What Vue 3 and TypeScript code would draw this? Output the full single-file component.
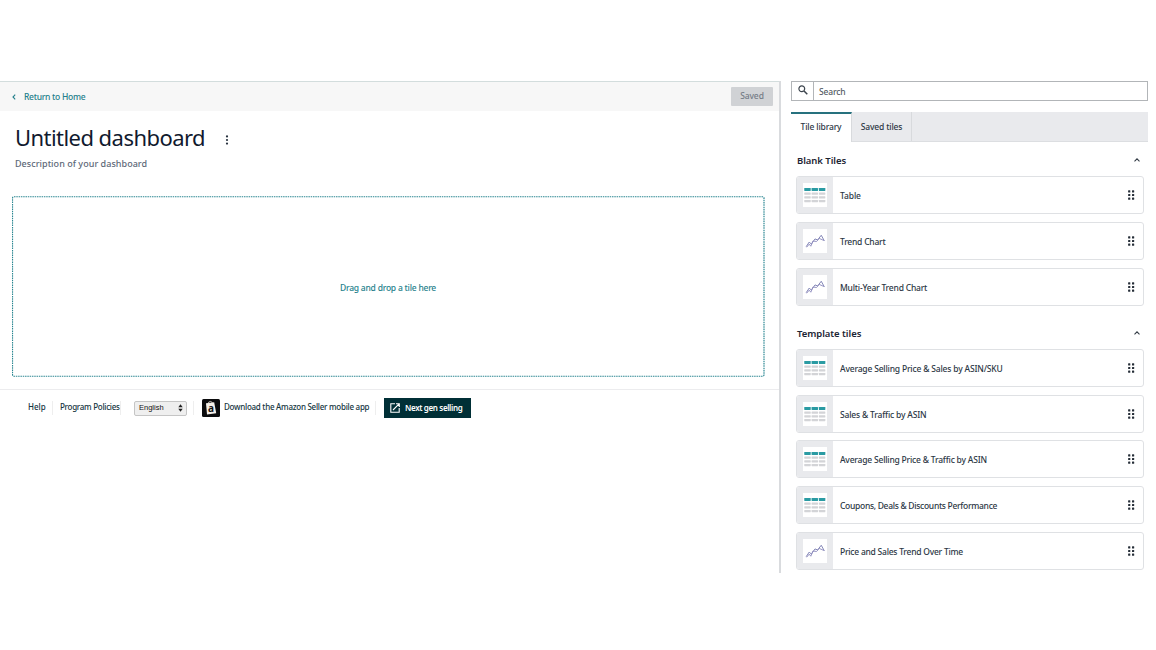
<script setup lang="ts">
interface Tile {
  label: string
  kind: 'table' | 'trend'
  spacing: number
}
interface Section {
  title: string
  tiles: Tile[]
}

const sections: Section[] = [
  {
    title: 'Blank Tiles',
    tiles: [
      { label: 'Table', kind: 'table', spacing: -0.1 },
      { label: 'Trend Chart', kind: 'trend', spacing: -0.22 },
      { label: 'Multi-Year Trend Chart', kind: 'trend', spacing: -0.21 },
    ],
  },
  {
    title: 'Template tiles',
    tiles: [
      { label: 'Average Selling Price & Sales by ASIN/SKU', kind: 'table', spacing: -0.18 },
      { label: 'Sales & Traffic by ASIN', kind: 'table', spacing: -0.18 },
      { label: 'Average Selling Price & Traffic by ASIN', kind: 'table', spacing: -0.2 },
      { label: 'Coupons, Deals & Discounts Performance', kind: 'table', spacing: -0.3 },
      { label: 'Price and Sales Trend Over Time', kind: 'trend', spacing: -0.24 },
    ],
  },
]
</script>

<template>
  <div class="page">
    <main class="main">
      <header class="topbar">
        <a class="back">
          <svg width="4" height="6" viewBox="0 0 4 6"><path d="M3.2 .7 1 3l2.200 2.300" fill="none" stroke="#247f8b" stroke-width="1.100" /></svg>
          <span>Return to Home</span>
        </a>
        <button class="saved">Saved</button>
      </header>
      <div class="title-row">
        <h1>Untitled dashboard</h1>
        <svg class="kebab" width="4" height="10" viewBox="0 0 4 10" fill="#28323f">
          <circle cx="2" cy="1.400" r="1.100" /><circle cx="2" cy="5" r="1.100" /><circle cx="2" cy="8.600" r="1.100" />
        </svg>
      </div>
      <p class="desc">Description of your dashboard</p>
      <div class="drop">
        <svg class="outline" width="753" height="181">
          <rect x=".5" y=".75" width="751.5" height="179.500" rx="1.500" fill="none" stroke="#2c8792" stroke-width="1.200" stroke-dasharray="1.500 .8" />
        </svg>
        <span>Drag and drop a tile here</span>
      </div>
      <footer class="footer">
        <a class="help">Help</a>
        <i class="sep" />
        <a class="policies">Program Policies</a>
        <i class="sep s2" />
        <div class="select">
          <span>English</span>
          <svg width="5" height="8" viewBox="0 0 5 8"><path d="M.3 3.300 2.500.3l2.200 3zM.3 4.700l2.200 3 2.200-3z" fill="#222" /></svg>
        </div>
        <i class="sep s3" />
        <div class="app-icon">
          <svg width="18" height="18" viewBox="0 0 18 18">
            <rect width="18" height="18" rx="1.500" fill="#0b0b0d" />
            <path d="M4 4.200 12.200 3.200 14.200 14.300 5 15.500z" fill="#f4efe9" />
            <path d="M6.500 4.500V3.300Q8.300 1.500 10.200 3.300V4" fill="none" stroke="#e5ddd5" stroke-width=".8" />
          </svg>
          <b>a</b>
        </div>
        <span class="download">Download the Amazon Seller mobile app</span>
        <i class="sep s4" />
        <button class="nextgen">
          <svg width="10" height="10" viewBox="0 0 10 10" fill="none" stroke="#fff" stroke-width="1.100">
            <path d="M5 .8H.8V9.200H9.200V5M6 .7H9.300V4M9.100 .9 3 7" />
          </svg>
          <span>Next gen selling</span>
        </button>
      </footer>
    </main>

    <aside class="side">
      <div class="search">
        <div class="glass">
          <svg width="10" height="10" viewBox="0 0 10 10" fill="none" stroke="#3c444d"><circle cx="3.800" cy="3.800" r="2.900" stroke-width="1.200" /><path d="M6 6 9.300 9.300" stroke-width="1.500" /></svg>
        </div>
        <span>Search</span>
      </div>
      <nav class="tabs">
        <div class="tab active"><span>Tile library</span></div>
        <div class="tab"><span>Saved tiles</span></div>
      </nav>
      <section v-for="section in sections" :key="section.title" class="section">
        <h2>
          <span>{{ section.title }}</span>
          <svg width="6" height="4" viewBox="0 0 6 4"><path d="M.5 3.400 3 .9l2.500 2.500" fill="none" stroke="#333c46" stroke-width="1.100" /></svg>
        </h2>
        <div class="tiles">
          <article v-for="tile in section.tiles" :key="tile.label" class="tile">
            <div class="thumb">
              <svg v-if="tile.kind === 'table'" width="24" height="24" viewBox="0 0 23 23">
                <rect width="23" height="23" fill="#fff" />
                <g v-for="col in 3" :key="col" :transform="`translate(${(col - 1) * 7 + 1.2} 0)`">
                  <rect y="4.800" width="6.200" height="2.900" rx=".4" fill="#2a9ba3" />
                  <rect v-for="row in 3" :key="row" :y="5.6 + row * 3.6" width="6.200" height="2" rx=".4" fill="#d3d4d7" />
                </g>
              </svg>
              <svg v-else width="24" height="24" viewBox="0 0 23 23" fill="none" stroke-linejoin="round">
                <rect width="23" height="23" fill="#fff" />
                <path d="M3 17 6 12.500 8 14.500 11.500 9.500 14 10.500 17.500 6 20.500 11.500" stroke="#7c7fb2" stroke-width=".9" />
                <path d="M3.500 17.500 6 14.500 7.500 16.500 9.500 11.500 13 12 15.500 9 20 11" stroke="#918fc0" stroke-width=".9" />
              </svg>
            </div>
            <span class="label" :style="{ letterSpacing: `${tile.spacing}px` }">{{ tile.label }}</span>
            <svg class="grip" width="7" height="10" viewBox="0 0 7 10" fill="#252d37">
              <g v-for="row in 3" :key="row">
                <rect x=".1" :y="row * 3.7 - 3.5" width="2.200" height="2.200" rx=".5" />
                <rect x="4" :y="row * 3.7 - 3.5" width="2.200" height="2.200" rx=".5" />
              </g>
            </svg>
          </article>
        </div>
      </section>
    </aside>
  </div>
</template>

<style>
body {
  background: #fff;
}
</style>

<style scoped>
* {
  box-sizing: border-box;
}
.page {
  display: flex;
  width: 1156px;
  height: 650px;
  padding-top: 81px;
  overflow: hidden;
  font-family: "Noto Sans", "Open Sans", sans-serif;
  font-size: 8.5px;
  font-weight: 500;
  line-height: 12px;
  color: #2c3745;
  white-space: nowrap;
}
.main {
  width: 781px;
  height: 492px;
  flex: none;
  border-right: 2px solid #d9dbde;
}
.topbar {
  display: flex;
  align-items: center;
  justify-content: space-between;
  height: 30px;
  padding: 0 6px 1px 12px;
  background: #f7f7f7;
  border-top: 1px solid #d3dddd;
}
.back {
  display: flex;
  align-items: center;
  gap: 8px;
  padding-top: 1px;
  color: #247f8b;
  letter-spacing: -0.27px;
}
button {
  border: 0;
  font: inherit;
}
.saved {
  width: 42px;
  height: 19px;
  padding: 0;
  border-radius: 1px;
  background: #d0d2d5;
  color: #747b85;
  letter-spacing: -0.1px;
}
.title-row {
  display: flex;
  align-items: center;
  height: 30px;
  margin: 11px 0 0 15px;
}
h1 {
  width: 210px;
  margin: 0;
  font-size: 22px;
  line-height: 30px;
  font-weight: 400;
  letter-spacing: -0.55px;
  color: #111a2e;
}
.kebab {
  margin-top: 5px;
}
.desc {
  margin: 6px 0 0 15px;
  font-size: 9px;
  letter-spacing: 0.04px;
  color: #5d6877;
}
.drop {
  position: relative;
  display: flex;
  align-items: center;
  justify-content: center;
  width: 753px;
  height: 181px;
  margin: 26px 0 0 12px;
  padding: 2px 1px 0 0;
  color: #247f8b;
  letter-spacing: -0.22px;
}
.outline {
  position: absolute;
  inset: 0;
}
.footer {
  display: flex;
  align-items: center;
  height: 37px;
  margin-top: 12px;
  padding-left: 28px;
  border-top: 1px solid #ececee;
  color: #153541;
  font-size: 8px;
}
.footer > * {
  flex: none;
}
.footer > a,
.download {
  padding-bottom: 2px;
}
.help {
  width: 24px;
}
.policies {
  width: 67px;
  padding-left: 7px;
  letter-spacing: -0.28px;
}
.sep {
  width: 1px;
  height: 14px;
  background: #eee;
}
.select {
  display: flex;
  align-items: center;
  justify-content: space-between;
  width: 53px;
  height: 15px;
  margin-left: 13px;
  padding: 0 3px 0 4px;
  border: 1px solid #c5c5c5;
  border-radius: 2px;
  background: #efefef;
  font-family: "Liberation Sans", sans-serif;
  font-size: 7.5px;
  color: #111;
}
.s3 {
  margin-left: 6px;
}
.app-icon {
  position: relative;
  width: 18px;
  height: 18px;
  margin-left: 8px;
}
.app-icon svg {
  display: block;
}
.app-icon b {
  position: absolute;
  left: 6px;
  top: 3px;
  font-size: 10px;
  color: #111;
}
.download {
  width: 155px;
  padding-left: 4px;
  letter-spacing: -0.26px;
}
.nextgen {
  display: flex;
  align-items: center;
  gap: 5px;
  width: 87px;
  height: 20px;
  margin-left: 8px;
  padding: 0 0 0 6px;
  background: #002f36;
  color: #fff;
  font-weight: 600;
  letter-spacing: -0.36px;
}
.side {
  width: 375px;
  padding: 0 8px 0 10px;
}
.search {
  display: flex;
  align-items: center;
  height: 20px;
  border: 1px solid #b2b5b8;
  color: #545b64;
}
.glass {
  display: flex;
  align-items: center;
  justify-content: center;
  width: 22px;
  height: 18px;
  margin-right: 5px;
  padding-bottom: 2px;
  border-right: 1px solid #b2b5b8;
}
.search > span {
  padding-top: 1px;
  letter-spacing: -0.15px;
}
.tabs {
  display: flex;
  height: 30px;
  margin-top: 11px;
  background: #e9eaed;
  border-bottom: 1px solid #dcdee1;
}
.tab {
  display: flex;
  align-items: center;
  justify-content: center;
  width: 60px;
  padding-top: 1px;
  border-right: 1px solid #d8dadd;
  letter-spacing: -0.15px;
}
.tab.active {
  width: 61px;
  height: 30px;
  padding: 0 0 2px;
  background: #fff;
  border-top: 2px solid #26717e;
}
.section {
  padding: 0 4px 0 5px;
}
.section + .section {
  margin-top: 15px;
}
.section + .section h2 {
  margin-bottom: 1px;
}
h2 {
  display: flex;
  align-items: center;
  justify-content: space-between;
  height: 27px;
  margin: 0;
  padding: 0 4px 0 1px;
  font-size: 9.5px;
  font-weight: 600;
  letter-spacing: -0.05px;
  color: #1b2433;
}
h2 svg {
  margin-bottom: 2px;
}
.tabs + .section h2 {
  height: 26px;
  margin: 6px 0 2px;
}
.tiles {
  display: flex;
  flex-direction: column;
  gap: 7.850px;
}
.tile {
  display: flex;
  align-items: center;
  height: 38px;
  border: 1px solid #dfe1e4;
  border-radius: 3px;
  overflow: hidden;
}
.thumb {
  display: flex;
  align-items: center;
  justify-content: center;
  width: 36px;
  height: 36px;
  background: #e9eaed;
}
.label {
  flex: 1;
  padding: 2px 0 0 7px;
}
.grip {
  margin-right: 8px;
}
</style>
